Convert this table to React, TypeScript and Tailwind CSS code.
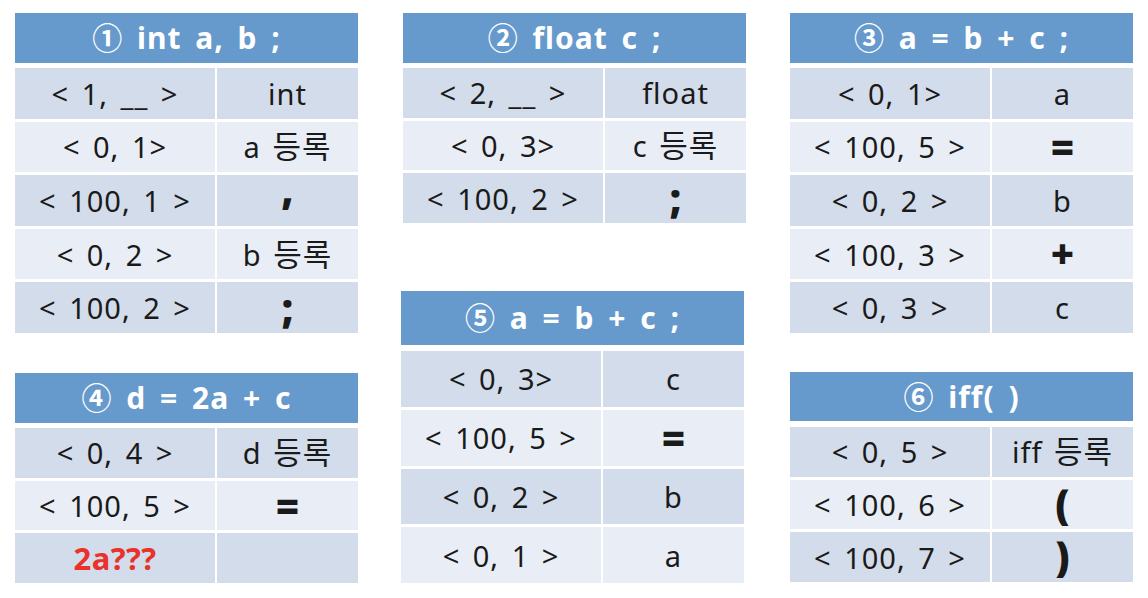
type Cell = { text: string; big?: boolean; lift?: boolean };

type TableProps = {
  title: string;
  rows: [string, Cell][];
  headerH: string;
  headerGap: string;
  bodyH: string;
  className?: string;
};

const font = { fontFamily: '"Noto Sans", "Noto Sans CJK KR", sans-serif' };

const withHangul = (text: string) => {
  const m = text.match(/^(.*?)(등록)$/);
  if (!m) return text;
  return (
    <>
      {m[1]}
      <span className="text-[31px] leading-none">{m[2]}</span>
    </>
  );
};

const TokenTable: React.FC<TableProps> = ({ title, rows, headerH, headerGap, bodyH, className }) => {
  return (
    <div className={`w-[343px] flex flex-col ${className ?? ""}`}>
      <div
        className={`${headerH} ${headerGap} bg-[#6699cc] flex items-center justify-center text-white font-bold text-[30px] leading-none tracking-[1px] [word-spacing:5px] whitespace-pre`}
      >
        {title}
      </div>

      <div className={`${bodyH} flex flex-col gap-[3px]`}>
        {rows.map(([left, right], i) => (
          <div key={i} className="flex-1 grid grid-cols-[200px_141px] gap-x-[2px]">
            <div
              className={`flex items-center justify-center whitespace-pre leading-none ${
                i % 2 === 0 ? "bg-[#d3dcea]" : "bg-[#e9eef6]"
              } ${
                left === "2a???"
                  ? "text-[#e8322a] font-bold text-[31px] tracking-[0.5px]"
                  : "text-[#1a1a1a] text-[29px] tracking-[1px] [word-spacing:4px]"
              }`}
            >
              {left}
            </div>
            <div
              className={`flex items-center justify-center whitespace-pre leading-none text-[#1a1a1a] ${
                i % 2 === 0 ? "bg-[#d3dcea]" : "bg-[#e9eef6]"
              } ${right.big ? "font-black text-[40px]" : "text-[29px] tracking-[1px] [word-spacing:3px]"}`}
            >
              <span className={right.lift ? "-translate-y-[11px]" : ""}>{withHangul(right.text)}</span>
            </div>
          </div>
        ))}
      </div>
    </div>
  );
};

const t = (text: string): Cell => ({ text });
const b = (text: string): Cell => ({ text, big: true });

export default function App() {
  return (
    <div className="w-[1148px] h-[598px] bg-white flex" style={font}>
      <div className="ml-[15px] pt-[13px] flex flex-col">
        <TokenTable
          title="① int a, b ;"
          headerH="h-[50px]"
          headerGap="mb-[5px]"
          bodyH="h-[265px]"
          rows={[
            ["< 1, __ >", t("int")],
            ["< 0, 1>", t("a 등록")],
            ["< 100, 1 >", { text: ",", big: true, lift: true }],
            ["< 0, 2 >", t("b 등록")],
            ["< 100, 2 >", b(";")],
          ]}
        />
        <TokenTable
          className="mt-[40px]"
          title="④ d = 2a + c"
          headerH="h-[50px]"
          headerGap="mb-[5px]"
          bodyH="h-[155px]"
          rows={[
            ["< 0, 4 >", t("d 등록")],
            ["< 100, 5 >", b("=")],
            ["2a???", t("")],
          ]}
        />
      </div>

      <div className="ml-[43px] pt-[13px] flex flex-col">
        <TokenTable
          className="ml-[2px]"
          title="② float c ;"
          headerH="h-[50px]"
          headerGap="mb-[5px]"
          bodyH="h-[155px]"
          rows={[
            ["< 2, __ >", t("float")],
            ["< 0, 3>", t("c 등록")],
            ["< 100, 2 >", b(";")],
          ]}
        />
        <TokenTable
          className="mt-[68px]"
          title="⑤ a = b + c ;"
          headerH="h-[54px]"
          headerGap="mb-[6px]"
          bodyH="h-[232px]"
          rows={[
            ["< 0, 3>", t("c")],
            ["< 100, 5 >", b("=")],
            ["< 0, 2 >", t("b")],
            ["< 0, 1 >", t("a")],
          ]}
        />
      </div>

      <div className="ml-[44px] pt-[13px] flex flex-col">
        <TokenTable
          title="③ a = b + c ;"
          headerH="h-[50px]"
          headerGap="mb-[5px]"
          bodyH="h-[265px]"
          rows={[
            ["< 0, 1>", t("a")],
            ["< 100, 5 >", b("=")],
            ["< 0, 2 >", t("b")],
            ["< 100, 3 >", b("+")],
            ["< 0, 3 >", t("c")],
          ]}
        />
        <TokenTable
          className="mt-[39px]"
          title="⑥ iff( )"
          headerH="h-[49px]"
          headerGap="mb-[6px]"
          bodyH="h-[155px]"
          rows={[
            ["< 0, 5 >", t("iff 등록")],
            ["< 100, 6 >", b("(")],
            ["< 100, 7 >", b(")")],
          ]}
        />
      </div>
    </div>
  );
}
